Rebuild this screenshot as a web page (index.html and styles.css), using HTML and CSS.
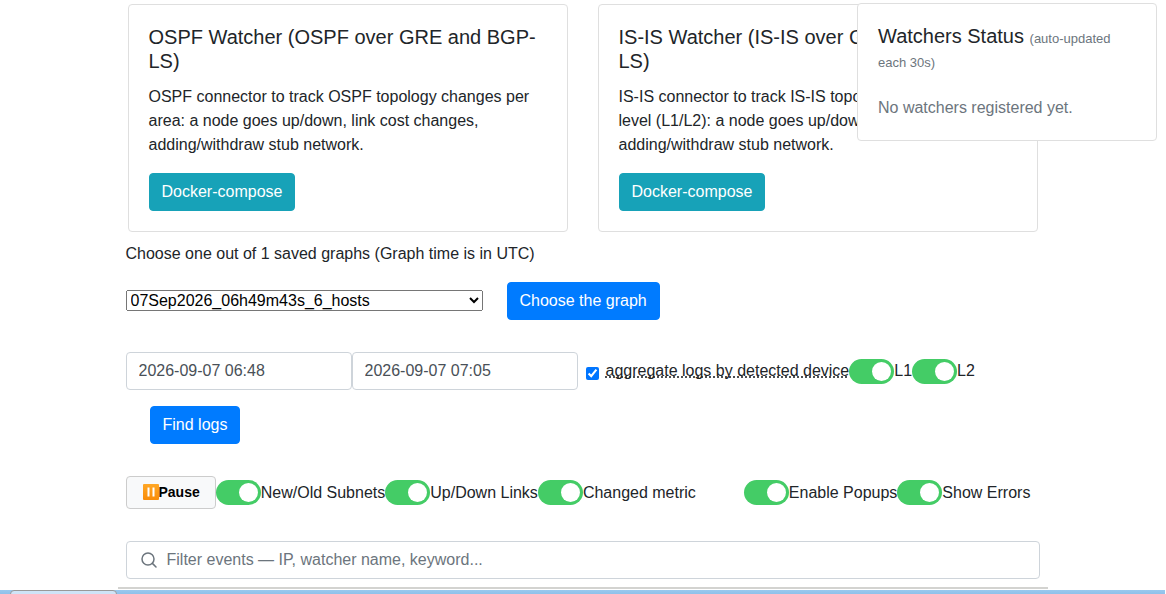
FILE: index.html
```
<!DOCTYPE html>
<html lang="en">
<head>
<meta charset="utf-8">
<meta name="viewport" content="width=device-width, initial-scale=1">
<title>Watchers</title>
<link rel="stylesheet" href="styles.css">
</head>
<body>
<main class="page">
  <section class="cards">
    <article class="card">
      <h5 class="card-title">OSPF Watcher (OSPF over GRE and BGP-LS)</h5>
      <p class="card-text">OSPF connector to track OSPF topology changes per area: a node goes up/down, link cost changes, adding/withdraw stub network.</p>
      <a class="btn btn-info" href="#ospf">Docker-compose</a>
    </article>
    <article class="card">
      <h5 class="card-title">IS-IS Watcher (IS-IS over GRE and BGP-LS)</h5>
      <p class="card-text">IS-IS connector to track IS-IS topology changes per level (L1/L2): a node goes up/down, link cost changes, adding/withdraw stub network.</p>
      <a class="btn btn-info" href="#isis">Docker-compose</a>
    </article>
  </section>

  <form class="controls">
    <label for="graph">Choose one out of 1 saved graphs (Graph time is in UTC)</label>
    <div class="row graph-row">
      <select class="graph-select" id="graph">
        <option>07Sep2026_06h49m43s_6_hosts</option>
      </select>
      <button class="btn btn-primary" type="button">Choose the graph</button>
    </div>

    <div class="row">
      <input class="field date" type="text" value="2026-09-07 06:48" aria-label="Start time">
      <input class="field date" type="text" value="2026-09-07 07:05" aria-label="End time">
      <input class="check" type="checkbox" id="aggregate" checked>
      <label for="aggregate"><abbr title="Group log lines by device">aggregate logs by detected device</abbr></label>
      <label class="toggle"><input class="switch" type="checkbox" checked>L1</label>
      <label class="toggle"><input class="switch" type="checkbox" checked>L2</label>
    </div>
    <div class="find-row">
      <button class="btn btn-primary" type="button">Find logs</button>
    </div>

    <div class="row">
      <button class="pause" type="button">
        <svg class="pause-icon" viewBox="0 0 16 16" aria-hidden="true">
          <defs><linearGradient id="amber" x1="0" y1="0" x2="0" y2="1"><stop offset="0" stop-color="#ffa726"/><stop offset="1" stop-color="#f98c08"/></linearGradient></defs>
          <rect width="16" height="16" rx="1" fill="url(#amber)"/>
          <path d="M5.5 3.5v9M10.5 3.5v9" stroke="#fff" stroke-width="2"/>
        </svg>Pause</button>
      <label class="toggle"><input class="switch" type="checkbox" checked>New/Old Subnets</label>
      <label class="toggle"><input class="switch" type="checkbox" checked>Up/Down Links</label>
      <label class="toggle"><input class="switch" type="checkbox" checked>Changed metric</label>
      <label class="toggle toggle-apart"><input class="switch" type="checkbox" checked>Enable Popups</label>
      <label class="toggle"><input class="switch" type="checkbox" checked>Show Errors</label>
    </div>

    <div class="search">
      <svg class="search-icon" viewBox="0 0 16 16" fill="none" stroke="#6c757d" stroke-width="1.5" stroke-linecap="round" aria-hidden="true"><circle cx="7" cy="7" r="6"/><path d="M11.4 11.4 15 15"/></svg>
      <input class="field search-field" type="text" placeholder="Filter events — IP, watcher name, keyword..." aria-label="Filter events">
    </div>
  </form>
  <div class="divider"></div>
</main>

<div class="panel"><div class="panel-tab"></div></div>

<aside class="status">
  <h5 class="status-title">Watchers Status <small class="muted">(auto-updated each 30s)</small></h5>
  <p class="muted">No watchers registered yet.</p>
</aside>
</body>
</html>
```

FILE: styles.css
```
* { box-sizing: border-box; }

body {
  display: flex;
  flex-direction: column;
  height: 100vh;
  margin: 0 1px 0 0;
  overflow: hidden;
  background: #fff;
  color: #212529;
  font: 16px/24px "Liberation Sans", Arial, sans-serif;
}

h5, p { margin: 0; font-weight: 400; }

.page {
  flex: none;
  width: 100%;
  max-width: 930px;
  margin: 4px auto 1px;
}

.cards {
  display: grid;
  grid-template-columns: 1fr 1fr;
  gap: 30px;
  padding: 0 10px;
}

.card {
  padding: 20px;
  border: 1px solid #dfdfdf;
  border-radius: 4px;
}

.card-title { margin-bottom: 12px; font-size: 20px; }
.card-text { margin-bottom: 16px; }

.btn {
  display: inline-block;
  padding: 6px 12px;
  border: 1px solid transparent;
  border-radius: 4px;
  color: #fff;
  font: inherit;
  text-decoration: none;
  vertical-align: top;
}

.btn-info { background: #17a2b8; border-color: #17a2b8; }
.btn-primary { background: #007bff; border-color: #007bff; }

.controls { padding: 10px 8px 8px; }

.row { display: flex; align-items: center; margin-bottom: 32px; }
.graph-row { gap: 24px; margin-top: 16px; }
.graph-select { width: 357px; margin: 0 0 2px; font: inherit; }

.field {
  height: 38px;
  padding: 6px 12px;
  border: 1px solid #ced4da;
  border-radius: 4px;
  background: #fff;
  color: #495057;
  font: inherit;
}

.field::placeholder { color: #6c757d; opacity: 1; }
.date { width: 226px; }

.check { width: 13px; height: 13px; margin: 4px 7px 0 8px; }
abbr { text-decoration: underline dotted; text-decoration-skip-ink: none; }

.toggle { display: flex; align-items: center; }
.toggle-apart { margin-left: 48px; }

.switch {
  display: flex;
  appearance: none;
  justify-content: flex-end;
  width: 45px;
  height: 25px;
  margin: 0;
  padding: 3px;
  border-radius: 13px;
  background: #4c6;
}

.switch::before {
  content: "";
  width: 19px;
  height: 19px;
  border-radius: 50%;
  background: #fff;
}

.switch:not(:checked) { justify-content: flex-start; background: #ccc; }

.find-row { margin: -16px 0 32px 24px; }

.pause {
  display: flex;
  align-items: center;
  height: 33px;
  padding: 0 15px 2px 16px;
  border: 1px solid #ccc;
  border-radius: 4px;
  background: #f8f9fa;
  color: #000;
  font: bold 14px/20px "Liberation Sans", Arial, sans-serif;
}

.pause-icon { width: 16px; height: 16px; }

.search { position: relative; }
.search-icon { position: absolute; top: 11px; left: 15px; width: 16px; height: 16px; }
.search-field { display: block; width: 100%; padding-left: 40px; }

.divider { height: 2px; background: #d3d3d0; }

.panel {
  flex: 1;
  min-height: 0;
  padding: 0 10px;
  overflow: hidden;
  background: linear-gradient(#9ac8ee, #8fc1ea 4px);
}

.panel-tab {
  width: 107px;
  height: 30px;
  border: 1px solid #999;
  border-radius: 4px;
  background: #cfe4f7;
}

.status {
  position: absolute;
  top: 3px;
  right: 9px;
  width: 300px;
  padding: 20px;
  border: 1px solid #dfdfdf;
  border-radius: 4px;
  background: #fff;
}

.status-title { margin-bottom: 24px; font-size: 20px; }
.status-title small { font-size: 13px; line-height: 16px; }
.muted { color: #6c757d; }
```
